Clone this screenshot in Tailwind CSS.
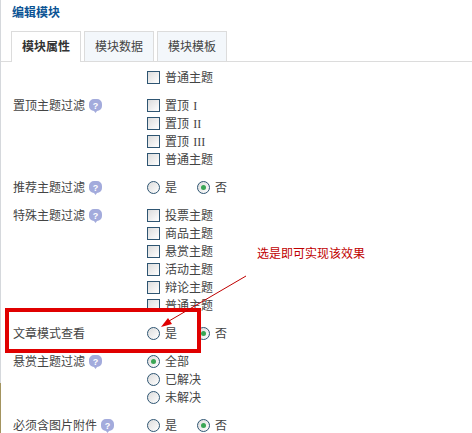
<!DOCTYPE html>
<html><head><meta charset="utf-8">
<script src="https://cdn.jsdelivr.net/npm/@tailwindcss/browser@4"></script>
</head>
<body class="m-0 bg-white">
<div class="relative w-[472px] h-[433px] overflow-hidden bg-white text-[12px] leading-[18px] text-[#444] font-['Liberation_Sans','Noto_Sans_CJK_SC',sans-serif]">
  <div class="h-[31px] pl-[12px] pt-[4px] text-[#0b5394] font-bold leading-[18px]">编辑模块</div>
  <div class="flex h-[31px] pl-[11px] gap-[3px] border-b border-[#dcdcdc]">
    <div class="w-[70px] h-[31px] bg-white border border-[#dcdcdc] border-b-0 text-center leading-[30px] font-semibold text-[#333]">模块属性</div>
    <div class="w-[70px] h-[30px] bg-[#f3f7fb] border border-[#dcdcdc] border-b-0 text-center leading-[30px]">模块数据</div>
    <div class="w-[70px] h-[30px] bg-[#f3f7fb] border border-[#dcdcdc] border-b-0 text-center leading-[30px]">模块模板</div>
  </div>
  <div class="pt-[7px] flex flex-col gap-[10px]">
    <div class="flex h-[18px]"><div class="w-[147px]"></div><div class="flex items-center gap-[5px]"><span class="w-[13px] h-[13px] mb-[2px] border border-[#2e5572] bg-gradient-to-br from-[#dcdcdc] to-white"></span>普通主题</div></div>

    <div class="flex">
      <div class="w-[147px] pl-[13px] flex items-center h-[18px] gap-[4px]">置顶主题过滤<svg width="13" height="14" viewBox="0 0 13 14"><path d="M5 0h3a5 5 0 0 1 5 5v2a5 5 0 0 1-5 5l-1.5 2-1.5-2a5 5 0 0 1-5-5V5a5 5 0 0 1 5-5z" fill="#a3abdc"/><text x="6.5" y="9.5" font-size="9" font-weight="700" text-anchor="middle" fill="#fff" font-family="Liberation Sans">?</text></svg></div>
      <div class="flex flex-col">
        <div class="flex items-center h-[18px] gap-[5px]"><span class="w-[13px] h-[13px] mb-[2px] border border-[#2e5572] bg-gradient-to-br from-[#dcdcdc] to-white"></span><span>置顶 <span class="ml-[1px] font-['Liberation_Serif',serif]">I</span></span></div>
        <div class="flex items-center h-[18px] gap-[5px]"><span class="w-[13px] h-[13px] mb-[2px] border border-[#2e5572] bg-gradient-to-br from-[#dcdcdc] to-white"></span><span>置顶 <span class="ml-[1px] font-['Liberation_Serif',serif]">II</span></span></div>
        <div class="flex items-center h-[18px] gap-[5px]"><span class="w-[13px] h-[13px] mb-[2px] border border-[#2e5572] bg-gradient-to-br from-[#dcdcdc] to-white"></span><span>置顶 <span class="ml-[1px] font-['Liberation_Serif',serif]">III</span></span></div>
        <div class="flex items-center h-[18px] gap-[5px]"><span class="w-[13px] h-[13px] mb-[2px] border border-[#2e5572] bg-gradient-to-br from-[#dcdcdc] to-white"></span>普通主题</div>
      </div>
    </div>

    <div class="flex">
      <div class="w-[147px] pl-[13px] flex items-center h-[18px] gap-[4px]">推荐主题过滤<svg width="13" height="14" viewBox="0 0 13 14"><path d="M5 0h3a5 5 0 0 1 5 5v2a5 5 0 0 1-5 5l-1.5 2-1.5-2a5 5 0 0 1-5-5V5a5 5 0 0 1 5-5z" fill="#a3abdc"/><text x="6.5" y="9.5" font-size="9" font-weight="700" text-anchor="middle" fill="#fff" font-family="Liberation Sans">?</text></svg></div>
      <div class="flex items-center h-[18px]">
        <div class="flex items-center gap-[5px] w-[50px]"><span class="w-[13px] h-[13px] mb-[2px] rounded-full border border-[#2e5572] bg-gradient-to-br from-[#dcdcdc] to-white"></span>是</div>
        <div class="flex items-center gap-[5px]"><span class="w-[13px] h-[13px] mb-[2px] rounded-full border border-[#2e5572] bg-gradient-to-br from-[#dcdcdc] to-white flex items-center justify-center"><span class="w-[5px] h-[5px] rounded-full bg-[#3aa655]"></span></span>否</div>
      </div>
    </div>

    <div class="flex">
      <div class="w-[147px] pl-[13px] flex items-center h-[18px] gap-[4px]">特殊主题过滤<svg width="13" height="14" viewBox="0 0 13 14"><path d="M5 0h3a5 5 0 0 1 5 5v2a5 5 0 0 1-5 5l-1.5 2-1.5-2a5 5 0 0 1-5-5V5a5 5 0 0 1 5-5z" fill="#a3abdc"/><text x="6.5" y="9.5" font-size="9" font-weight="700" text-anchor="middle" fill="#fff" font-family="Liberation Sans">?</text></svg></div>
      <div class="flex flex-col">
        <div class="flex items-center h-[18px] gap-[5px]"><span class="w-[13px] h-[13px] mb-[2px] border border-[#2e5572] bg-gradient-to-br from-[#dcdcdc] to-white"></span>投票主题</div>
        <div class="flex items-center h-[18px] gap-[5px]"><span class="w-[13px] h-[13px] mb-[2px] border border-[#2e5572] bg-gradient-to-br from-[#dcdcdc] to-white"></span>商品主题</div>
        <div class="flex items-center h-[18px] gap-[5px]"><span class="w-[13px] h-[13px] mb-[2px] border border-[#2e5572] bg-gradient-to-br from-[#dcdcdc] to-white"></span>悬赏主题</div>
        <div class="flex items-center h-[18px] gap-[5px]"><span class="w-[13px] h-[13px] mb-[2px] border border-[#2e5572] bg-gradient-to-br from-[#dcdcdc] to-white"></span>活动主题</div>
        <div class="flex items-center h-[18px] gap-[5px]"><span class="w-[13px] h-[13px] mb-[2px] border border-[#2e5572] bg-gradient-to-br from-[#dcdcdc] to-white"></span>辩论主题</div>
        <div class="flex items-center h-[18px] gap-[5px]"><span class="w-[13px] h-[13px] mb-[2px] border border-[#2e5572] bg-gradient-to-br from-[#dcdcdc] to-white"></span>普通主题</div>
      </div>
    </div>

    <div class="flex">
      <div class="w-[147px] pl-[13px] flex items-center h-[18px]">文章模式查看</div>
      <div class="flex items-center h-[18px]">
        <div class="flex items-center gap-[5px] w-[50px]"><span class="w-[13px] h-[13px] mb-[2px] rounded-full border border-[#2e5572] bg-gradient-to-br from-[#dcdcdc] to-white"></span>是</div>
        <div class="flex items-center gap-[5px]"><span class="w-[13px] h-[13px] mb-[2px] rounded-full border border-[#2e5572] bg-gradient-to-br from-[#dcdcdc] to-white flex items-center justify-center"><span class="w-[5px] h-[5px] rounded-full bg-[#3aa655]"></span></span>否</div>
      </div>
    </div>

    <div class="flex">
      <div class="w-[147px] pl-[13px] flex items-center h-[18px] gap-[4px]">悬赏主题过滤<svg width="13" height="14" viewBox="0 0 13 14"><path d="M5 0h3a5 5 0 0 1 5 5v2a5 5 0 0 1-5 5l-1.5 2-1.5-2a5 5 0 0 1-5-5V5a5 5 0 0 1 5-5z" fill="#a3abdc"/><text x="6.5" y="9.5" font-size="9" font-weight="700" text-anchor="middle" fill="#fff" font-family="Liberation Sans">?</text></svg></div>
      <div class="flex flex-col">
        <div class="flex items-center h-[18px] gap-[5px]"><span class="w-[13px] h-[13px] mb-[2px] rounded-full border border-[#2e5572] bg-gradient-to-br from-[#dcdcdc] to-white flex items-center justify-center"><span class="w-[5px] h-[5px] rounded-full bg-[#3aa655]"></span></span>全部</div>
        <div class="flex items-center h-[18px] gap-[5px]"><span class="w-[13px] h-[13px] mb-[2px] rounded-full border border-[#2e5572] bg-gradient-to-br from-[#dcdcdc] to-white"></span>已解决</div>
        <div class="flex items-center h-[18px] gap-[5px]"><span class="w-[13px] h-[13px] mb-[2px] rounded-full border border-[#2e5572] bg-gradient-to-br from-[#dcdcdc] to-white"></span>未解决</div>
      </div>
    </div>

    <div class="flex">
      <div class="w-[147px] pl-[13px] flex items-center h-[18px] gap-[4px]">必须含图片附件<svg width="13" height="14" viewBox="0 0 13 14"><path d="M5 0h3a5 5 0 0 1 5 5v2a5 5 0 0 1-5 5l-1.5 2-1.5-2a5 5 0 0 1-5-5V5a5 5 0 0 1 5-5z" fill="#a3abdc"/><text x="6.5" y="9.5" font-size="9" font-weight="700" text-anchor="middle" fill="#fff" font-family="Liberation Sans">?</text></svg></div>
      <div class="flex items-center h-[18px]">
        <div class="flex items-center gap-[5px] w-[50px]"><span class="w-[13px] h-[13px] mb-[2px] rounded-full border border-[#2e5572] bg-gradient-to-br from-[#dcdcdc] to-white"></span>是</div>
        <div class="flex items-center gap-[5px]"><span class="w-[13px] h-[13px] mb-[2px] rounded-full border border-[#2e5572] bg-gradient-to-br from-[#dcdcdc] to-white flex items-center justify-center"><span class="w-[5px] h-[5px] rounded-full bg-[#3aa655]"></span></span>否</div>
      </div>
    </div>
  </div>

  <div class="absolute left-0 top-0 w-[1px] h-[383px] bg-[#d5d8dc]"></div>
  <div class="absolute left-0 top-[383px] w-[1px] h-[50px] bg-[#a3945f]"></div>
  <div class="absolute left-[5px] top-[308px] w-[196px] h-[45px] border-[4px] border-[#e00000]"></div>
  <div class="absolute left-[257px] top-[244px] text-[#c00000] leading-[18px] pt-[1px]">选是即可实现该效果</div>
  <svg class="absolute left-0 top-0" width="472" height="433" viewBox="0 0 472 433"><line x1="246" y1="276" x2="169" y2="321" stroke="#c00000" stroke-width="1"/><polygon points="161,327 168,318 172,324" fill="#e00000"/></svg>
</div>
</body></html>
